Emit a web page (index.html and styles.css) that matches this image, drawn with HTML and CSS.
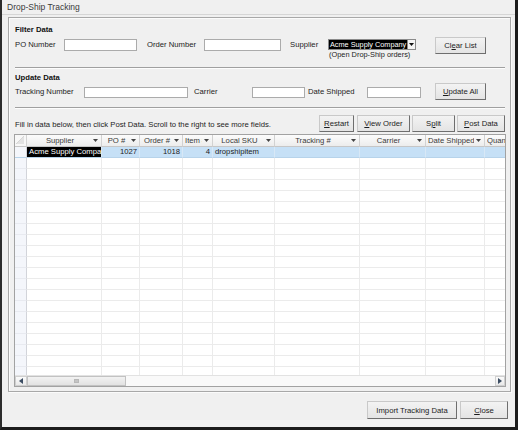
FILE: index.html
```html
<!DOCTYPE html>
<html>
<head>
<meta charset="utf-8">
<title>Drop-Ship Tracking</title>
<link rel="stylesheet" href="styles.css">
</head>
<body>
<div class="window">
  <div class="titlebar">Drop-Ship Tracking</div>
  <div class="panel">
    <div class="heading">Filter Data</div>
    <div class="frow row1">
      <span class="lbl w-po">PO Number</span>
      <span class="inp w-poi"></span>
      <span class="lbl w-ord">Order Number</span>
      <span class="inp w-ordi"></span>
      <span class="lbl w-sup">Supplier</span>
      <div class="combo-wrap">
        <div class="combo">
          <span class="combo-val">Acme Supply Company</span>
          <span class="combo-btn"><svg width="5" height="4" viewBox="0 0 5 4"><polygon points="0,0 5,0 2.5,3" fill="#111"/></svg></span>
        </div>
        <div class="hint">(Open Drop-Ship orders)</div>
      </div>
      <button class="btn b-clear">Cl<u>e</u>ar List</button>
    </div>
    <div class="sep s1"></div>
    <div class="heading h2">Update Data</div>
    <div class="frow row2">
      <span class="lbl w-trk">Tracking Number</span>
      <span class="inp sm w-trki"></span>
      <span class="lbl w-car">Carrier</span>
      <span class="inp sm w-cari"></span>
      <span class="lbl w-date">Date Shipped</span>
      <span class="inp sm w-datei"></span>
      <button class="btn b-upd"><u>U</u>pdate All</button>
    </div>
    <div class="sep s2"></div>
    <div class="frow row3">
      <span class="info">Fill in data below, then click Post Data. Scroll to the right to see more fields.</span>
      <button class="btn b-restart"><u>R</u>estart</button>
      <button class="btn b-view"><u>V</u>iew Order</button>
      <button class="btn b-split">S<u>p</u>lit</button>
      <button class="btn b-post"><u>P</u>ost Data</button>
    </div>
    <div class="grid">
      <div class="viewport">
        <div class="row head">
          <span class="c rh corner"><svg width="8" height="8" viewBox="0 0 8 8"><polygon points="0,8 8,0 8,8" fill="#e2e2e2"/><line x1="0" y1="8" x2="8" y2="0" stroke="#cfcfcf" stroke-width="0.8"/></svg></span>
          <span class="c"><span class="t">Supplier</span><svg class="dd" width="5" height="3" viewBox="0 0 5 3"><polygon points="0,0 5,0 2.5,3" fill="#444"/></svg></span>
          <span class="c"><span class="t">PO #</span><svg class="dd" width="5" height="3" viewBox="0 0 5 3"><polygon points="0,0 5,0 2.5,3" fill="#444"/></svg></span>
          <span class="c"><span class="t">Order #</span><svg class="dd" width="5" height="3" viewBox="0 0 5 3"><polygon points="0,0 5,0 2.5,3" fill="#444"/></svg></span>
          <span class="c"><span class="t clip">Item #</span><svg class="dd" width="5" height="3" viewBox="0 0 5 3"><polygon points="0,0 5,0 2.5,3" fill="#444"/></svg></span>
          <span class="c"><span class="t">Local SKU</span><svg class="dd" width="5" height="3" viewBox="0 0 5 3"><polygon points="0,0 5,0 2.5,3" fill="#444"/></svg></span>
          <span class="c"><span class="t">Tracking #</span><svg class="dd" width="5" height="3" viewBox="0 0 5 3"><polygon points="0,0 5,0 2.5,3" fill="#444"/></svg></span>
          <span class="c"><span class="t">Carrier</span><svg class="dd" width="5" height="3" viewBox="0 0 5 3"><polygon points="0,0 5,0 2.5,3" fill="#444"/></svg></span>
          <span class="c"><span class="t clip">Date Shipped</span><svg class="dd" width="5" height="3" viewBox="0 0 5 3"><polygon points="0,0 5,0 2.5,3" fill="#444"/></svg></span>
          <span class="c"><span class="t left">Quantity</span></span>
        </div>
        <div class="row sel">
          <i class="rh"></i><i class="cur">Acme Supply Company</i><i class="num">1027</i><i class="num">1018</i><i class="num">4</i><i>dropshipitem</i><i></i><i></i><i></i><i></i>
        </div>
        <div class="row"><i class="rh"></i><i></i><i></i><i></i><i></i><i></i><i></i><i></i><i></i><i></i></div>
        <div class="row"><i class="rh"></i><i></i><i></i><i></i><i></i><i></i><i></i><i></i><i></i><i></i></div>
        <div class="row"><i class="rh"></i><i></i><i></i><i></i><i></i><i></i><i></i><i></i><i></i><i></i></div>
        <div class="row"><i class="rh"></i><i></i><i></i><i></i><i></i><i></i><i></i><i></i><i></i><i></i></div>
        <div class="row"><i class="rh"></i><i></i><i></i><i></i><i></i><i></i><i></i><i></i><i></i><i></i></div>
        <div class="row"><i class="rh"></i><i></i><i></i><i></i><i></i><i></i><i></i><i></i><i></i><i></i></div>
        <div class="row"><i class="rh"></i><i></i><i></i><i></i><i></i><i></i><i></i><i></i><i></i><i></i></div>
        <div class="row"><i class="rh"></i><i></i><i></i><i></i><i></i><i></i><i></i><i></i><i></i><i></i></div>
        <div class="row"><i class="rh"></i><i></i><i></i><i></i><i></i><i></i><i></i><i></i><i></i><i></i></div>
        <div class="row"><i class="rh"></i><i></i><i></i><i></i><i></i><i></i><i></i><i></i><i></i><i></i></div>
        <div class="row"><i class="rh"></i><i></i><i></i><i></i><i></i><i></i><i></i><i></i><i></i><i></i></div>
        <div class="row"><i class="rh"></i><i></i><i></i><i></i><i></i><i></i><i></i><i></i><i></i><i></i></div>
        <div class="row"><i class="rh"></i><i></i><i></i><i></i><i></i><i></i><i></i><i></i><i></i><i></i></div>
        <div class="row"><i class="rh"></i><i></i><i></i><i></i><i></i><i></i><i></i><i></i><i></i><i></i></div>
        <div class="row"><i class="rh"></i><i></i><i></i><i></i><i></i><i></i><i></i><i></i><i></i><i></i></div>
        <div class="row"><i class="rh"></i><i></i><i></i><i></i><i></i><i></i><i></i><i></i><i></i><i></i></div>
        <div class="row"><i class="rh"></i><i></i><i></i><i></i><i></i><i></i><i></i><i></i><i></i><i></i></div>
        <div class="row"><i class="rh"></i><i></i><i></i><i></i><i></i><i></i><i></i><i></i><i></i><i></i></div>
        <div class="row"><i class="rh"></i><i></i><i></i><i></i><i></i><i></i><i></i><i></i><i></i><i></i></div>
        <div class="row"><i class="rh"></i><i></i><i></i><i></i><i></i><i></i><i></i><i></i><i></i><i></i></div>
      </div>
      <div class="hscroll">
        <span class="sb-btn"><svg width="4" height="6" viewBox="0 0 4 6"><polygon points="4,0 4,6 0,3" fill="#3c4d63"/></svg></span>
        <span class="sb-thumb"><span class="grip"></span></span>
        <span class="sb-track"></span>
        <span class="sb-btn right"><svg width="4" height="6" viewBox="0 0 4 6"><polygon points="0,0 0,6 4,3" fill="#3c4d63"/></svg></span>
      </div>
    </div>
  </div>
  <div class="footer">
    <button class="btn b-import">Import Tracking Data</button>
    <button class="btn b-close"><u>C</u>lose</button>
  </div>
</div>
</body>
</html>
```
FILE: styles.css
```css
* { box-sizing: border-box; }
html, body { margin: 0; padding: 0; }
body {
  width: 518px;
  height: 430px;
  font-family: "Liberation Sans", Arial, sans-serif;
  font-size: 7.7px;
  color: #1c1c1c;
  background: #f0f0f0;
  overflow: hidden;
}
.window {
  width: 518px;
  height: 430px;
  background: #f0f0f0;
  border-left: 2px solid #2c2c2c;
  border-right: 3px solid #1c1c1c;
  border-bottom: 3px solid #1c1c1c;
  display: flex;
  flex-direction: column;
}
.titlebar {
  height: 15px;
  line-height: 15px;
  padding-left: 5px;
  font-size: 8.5px;
  color: #3a3a3a;
  border-bottom: 1px solid #d6d6d6;
  flex: none;
}
.panel {
  flex: none;
  margin: 2px 4px 0 6px;
  height: 375px;
  border: 1px solid #a8a8a8;
  box-shadow: inset 1px 1px 0 #fbfbfb, 1px 1px 0 #fbfbfb;
  padding: 7px 5px 0 6px;
  display: flex;
  flex-direction: column;
}
.heading {
  font-weight: bold;
  line-height: 10px;
  height: 10px;
  color: #111;
}
.heading.h2 { margin-top: 4px; }
.frow { display: flex; align-items: flex-start; flex: none; }
.row1 { margin-top: 2px; height: 22px; }
.row2 { height: 17px; }
.row3 { margin-top: 6px; height: 17px; }
.lbl { line-height: 12px; margin-top: 2px; white-space: nowrap; }
.row2 .lbl { margin-top: 3px; }
.inp {
  display: block;
  height: 12px;
  margin-top: 2px;
  background: #fff;
  border: 1px solid #ababab;
}
.inp.sm { height: 11px; margin-top: 4px; }
.w-po { width: 49px; }
.w-poi { width: 73px; }
.w-ord { width: 57px; margin-left: 10px; }
.w-ordi { width: 77px; }
.w-sup { width: 38px; margin-left: 9px; }
.w-trk { width: 69px; }
.w-trki { width: 104px; }
.w-car { width: 58px; margin-left: 6px; }
.w-cari { width: 53px; }
.w-date { width: 59px; margin-left: 3px; }
.w-datei { width: 54px; }

.combo-wrap { width: 88px; margin-top: 2px; }
.combo {
  display: flex;
  height: 11px;
  border: 1px solid #8a8a8a;
  background: #fff;
}
.combo-val {
  flex: 1;
  background: #000;
  color: #fff;
  font-size: 7.3px;
  line-height: 9px;
  padding-left: 1px;
  white-space: nowrap;
  overflow: hidden;
}
.combo-btn {
  width: 8px;
  border-left: 1px solid #8a8a8a;
  background: #f4f4f4;
  display: flex;
  align-items: center;
  justify-content: center;
}
.hint { line-height: 9px; padding-left: 1px; white-space: nowrap; font-size: 7.4px; }

.btn {
  font-family: inherit;
  font-size: 7.7px;
  color: #1c1c1c;
  height: 17px;
  padding: 0;
  margin: 0;
  background: linear-gradient(#f3f3f3, #e4e4e4);
  border: 1px solid;
  border-color: #c9c9c9 #6e6e6e #6e6e6e #c9c9c9;
  white-space: nowrap;
}
.btn u { text-underline-offset: 1px; }
.b-clear { width: 51px; margin-left: 19px; }
.b-upd { width: 51px; margin-left: 14px; }

.sep {
  flex: none;
  height: 2px;
  border-top: 1px solid #a0a0a0;
  border-bottom: 1px solid #fdfdfd;
}
.s1 { margin-top: 8px; }
.s2 { margin-top: 7px; }

.info { flex: 1; line-height: 12px; margin-top: 4px; white-space: nowrap; }
.b-restart { width: 35px; }
.b-view { width: 53px; margin-left: 3px; }
.b-split { width: 43px; margin-left: 2px; }
.b-post { width: 48px; margin-left: 2px; }

.grid {
  flex: none;
  margin: 2px -1px 0 -1px;
  height: 253px;
  border: 1px solid #a2a2a2;
  background: #fff;
  display: flex;
  flex-direction: column;
}
.viewport { flex: 1; overflow: hidden; }
.row {
  display: grid;
  grid-template-columns: 12px 75px 38px 43px 30px 62px 85px 66px 59px 40px;
  height: 11px;
  width: 510px;
}
.row > i, .row > .c {
  font-style: normal;
  display: block;
  height: 11px;
  border-right: 1px solid #ebebeb;
  border-bottom: 1px solid #ebebeb;
  white-space: nowrap;
  overflow: hidden;
  line-height: 10px;
  padding: 0 2px;
}
.row > .rh {
  background: #f4f6fb;
  border-right-color: #d2d4da;
  border-bottom-color: #e8eaf0;
}
.row.head { height: 12px; }
.row.head > .c {
  height: 12px;
  display: flex;
  align-items: center;
  background: linear-gradient(#fcfcfc, #ececec);
  border-right: 1px solid #d2d2d2;
  border-bottom: 1px solid #c6c6c6;
  color: #3a3a3a;
  padding: 0 3px 0 2px;
  line-height: 11px;
}
.row.head > .corner { padding: 0; align-items: flex-start; background: #f7f7f7; }
.corner svg { margin: 1px 0 0 1px; }
.c .t { flex: 1; min-width: 0; text-align: center; overflow: hidden; white-space: nowrap; }
.c .t.clip { text-overflow: clip; }
.c .t.left { text-align: left; }
.c .dd { flex: none; margin-left: 2px; }
.row.sel > i { background: #c6e0f6; border-right-color: #d8e8f6; border-bottom-color: #b7d3ea; }
.row.sel > .rh { background: #f4f6fb; border-right-color: #d2d4da; }
.row.sel > .cur { background: #000; color: #fff; padding-left: 2px; }
.row.sel > .num { text-align: right; }

.hscroll {
  flex: none;
  height: 11px;
  display: flex;
  background: #f0f0f0;
  border-top: 1px solid #e2e2e2;
}
.sb-btn {
  width: 12px;
  height: 10px;
  display: flex;
  align-items: center;
  justify-content: center;
  background: linear-gradient(#fbfbfb, #e9e9e9);
  border: 1px solid #cfcfcf;
}
.sb-btn.right { width: 10px; }
.sb-thumb {
  width: 99px;
  height: 10px;
  background: linear-gradient(#f2f2f2, #e2e2e2);
  border: 1px solid #c2c2c2;
  display: flex;
  align-items: center;
  justify-content: center;
}
.grip { width: 5px; height: 4px; background: #c4c4c4; border: 1px solid #b8b8b8; }
.sb-track { flex: 1; background: #f9f9f9; }

.footer {
  flex: none;
  display: flex;
  justify-content: flex-end;
  margin-top: 9px;
  margin-right: 7px;
}
.footer .btn { height: 18px; }
.b-import { width: 90px; }
.b-close { width: 48px; margin-left: 3px; }
```
